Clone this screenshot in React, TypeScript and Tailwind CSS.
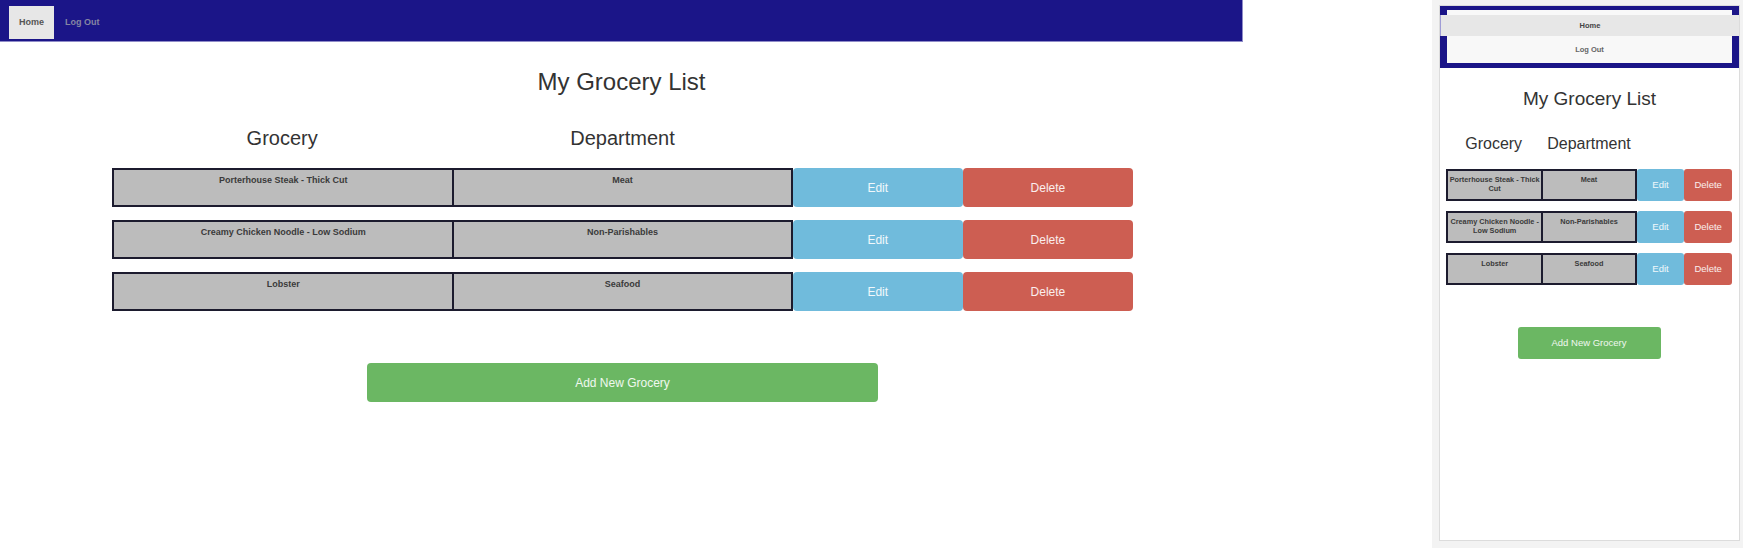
import React from 'react';

type Grocery = {
  name: string;
  department: string;
};

const groceries: Grocery[] = [
  { name: 'Porterhouse Steak - Thick Cut', department: 'Meat' },
  { name: 'Creamy Chicken Noodle - Low Sodium', department: 'Non-Parishables' },
  { name: 'Lobster', department: 'Seafood' },
];

const DesktopView: React.FC = () => {
  return (
    <div className="w-[1243px] shrink-0">
      <nav className="flex h-[42px] items-start border-b border-r border-[#8f8cc8] bg-[#1b1588] pl-[9px]">
        <a className="mt-[6px] flex h-[33px] w-[45px] items-center justify-center bg-[#e7e7e7] text-[9px] font-bold text-[#555]">
          Home
        </a>
        <a className="ml-[11px] mt-[6px] flex h-[33px] items-center text-[9px] font-bold text-[#8585a3]">
          Log Out
        </a>
      </nav>

      <h1 className="mt-[26px] text-center text-[24px] leading-[28px] text-[#333]">My Grocery List</h1>

      <div className="ml-[112px] w-[1021px]">
        <div className="mt-[30px] grid grid-cols-6 text-[20px] leading-[24px] text-[#333]">
          <div className="col-span-2 text-center">Grocery</div>
          <div className="col-span-2 text-center">Department</div>
        </div>

        <div className="mt-[18px] flex flex-col gap-[13px]">
          {groceries.map((g) => (
            <div key={g.name} className="grid h-[39px] grid-cols-6">
              <div className="col-span-2 border-2 border-r-0 border-[#1c1b2e] bg-[#bcbcbc] pt-[5px] text-center text-[9px] font-bold leading-[10px] text-[#3a3a3a]">
                {g.name}
              </div>
              <div className="col-span-2 border-2 border-[#1c1b2e] bg-[#bcbcbc] pt-[5px] text-center text-[9px] font-bold leading-[10px] text-[#3a3a3a]">
                {g.department}
              </div>
              <button className="flex items-center justify-center rounded-[4px] bg-[#70bbdc] text-[12px] text-white/90">
                Edit
              </button>
              <button className="flex items-center justify-center rounded-[4px] bg-[#cd5e52] text-[12px] text-white/90">
                Delete
              </button>
            </div>
          ))}
        </div>

        <button className="mx-auto mt-[52px] flex h-[39px] w-[511px] items-center justify-center rounded-[4px] bg-[#6bb763] text-[12px] text-white/90">
          Add New Grocery
        </button>
      </div>
    </div>
  );
};

const MobileView: React.FC = () => {
  return (
    <div className="h-full border border-[#dcdcdc] bg-white">
      <nav className="bg-[#1b1588] px-[7px] pb-[5px] pt-[4px]">
        <div className="bg-[#f8f8f8] pt-[5px]">
          <div className="-mx-[7px] flex h-[21px] items-center justify-center border-l border-[#9f9cd6] bg-[#e7e7e7] text-[7.5px] font-bold text-[#444]">
            Home
          </div>
          <div className="flex h-[27px] items-center justify-center text-[7.5px] font-bold text-[#666]">Log Out</div>
        </div>
      </nav>

      <h1 className="mt-[20px] text-center text-[19px] leading-[22px] text-[#333]">My Grocery List</h1>

      <div className="ml-[6px] w-[286px]">
        <div className="mt-[24px] grid grid-cols-6 text-[16px] leading-[20px] text-[#333]">
          <div className="col-span-2 text-center">Grocery</div>
          <div className="col-span-2 text-center">Department</div>
        </div>

        <div className="mt-[15px] flex flex-col gap-[10px]">
          {groceries.map((g) => (
            <div key={g.name} className="grid h-[32px] grid-cols-6">
              <div className="col-span-2 border-2 border-r-0 border-[#1c1b2e] bg-[#bcbcbc] pt-[5px] text-center text-[7.3px] font-bold leading-[8.5px] text-[#3a3a3a]">
                {g.name}
              </div>
              <div className="col-span-2 border-2 border-[#1c1b2e] bg-[#bcbcbc] pt-[5px] text-center text-[7.3px] font-bold leading-[8.5px] text-[#3a3a3a]">
                {g.department}
              </div>
              <button className="flex items-center justify-center rounded-[3px] bg-[#70bbdc] text-[9.5px] text-white/90">
                Edit
              </button>
              <button className="flex items-center justify-center rounded-[3px] bg-[#cd5e52] text-[9.5px] text-white/90">
                Delete
              </button>
            </div>
          ))}
        </div>

        <button className="mx-auto mt-[42px] flex h-[32px] w-[143px] items-center justify-center rounded-[3px] bg-[#6bb763] text-[9.5px] text-white/90">
          Add New Grocery
        </button>
      </div>
    </div>
  );
};

const App: React.FC = () => {
  return (
    <div className="flex h-[548px] w-[1743px] overflow-hidden bg-white font-['Liberation_Sans',Arial,sans-serif]">
      <DesktopView />
      <div className="w-[189px] shrink-0" />
      <div className="w-[311px] shrink-0 bg-[#f3f3f3] pb-[7px] pl-[7px] pr-[3px] pt-[5px]">
        <MobileView />
      </div>
    </div>
  );
};

export default App;
